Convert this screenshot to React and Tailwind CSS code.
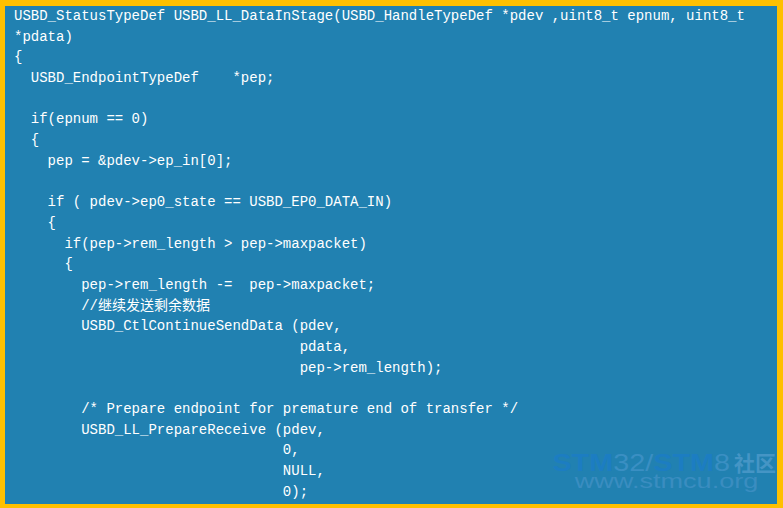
const codeLines = [
  "USBD_StatusTypeDef USBD_LL_DataInStage(USBD_HandleTypeDef *pdev ,uint8_t epnum, uint8_t",
  "*pdata)",
  "{",
  "  USBD_EndpointTypeDef    *pep;",
  "",
  "  if(epnum == 0)",
  "  {",
  "    pep = &pdev->ep_in[0];",
  "",
  "    if ( pdev->ep0_state == USBD_EP0_DATA_IN)",
  "    {",
  "      if(pep->rem_length > pep->maxpacket)",
  "      {",
  "        pep->rem_length -=  pep->maxpacket;",
  "        //继续发送剩余数据",
  "        USBD_CtlContinueSendData (pdev,",
  "                                  pdata,",
  "                                  pep->rem_length);",
  "",
  "        /* Prepare endpoint for premature end of transfer */",
  "        USBD_LL_PrepareReceive (pdev,",
  "                                0,",
  "                                NULL,",
  "                                0);",
];

export default function App() {
  return (
    <div className="h-[508px] w-[783px] overflow-hidden bg-[#ffc000] pb-[4px] pl-[5px] pr-[6px] pt-[6px]">
      <div className="relative h-full w-full overflow-hidden bg-[#2181b1] pl-[9px]">
        <pre className="m-0 font-['Liberation_Mono','Noto_Sans_CJK_SC',monospace] text-[14px] leading-[20.7px] text-white">
          {codeLines.map((line, i) => (
            <div key={i} className="h-[20.7px] whitespace-pre">
              {line}
            </div>
          ))}
        </pre>

        {/* watermark */}
        <div className="absolute right-[1px] top-[446px] flex flex-col items-end font-['Liberation_Sans',sans-serif]">
          <div className="flex h-[20px] items-baseline leading-[20px]">
            <span className="inline-block origin-right scale-x-[1.2] text-[24px]">
              <span className="font-bold text-[#1c7dc2]">STM</span>
              <span className="text-[#3a8fc3]">32/</span>
              <span className="font-bold text-[#1c7dc2]">STM</span>
              <span className="text-[#3a8fc3]">8</span>
            </span>
            <span className="ml-[4px] font-['Noto_Sans_CJK_SC',sans-serif] text-[21px] font-bold text-[#4595c5]">社区</span>
          </div>
          <div className="mr-[18px] inline-block h-[18px] origin-right scale-x-[1.29] text-[21px] leading-[18px] text-[#3a8dc0]">
            www.stmcu.org
          </div>
        </div>
      </div>
    </div>
  );
}
